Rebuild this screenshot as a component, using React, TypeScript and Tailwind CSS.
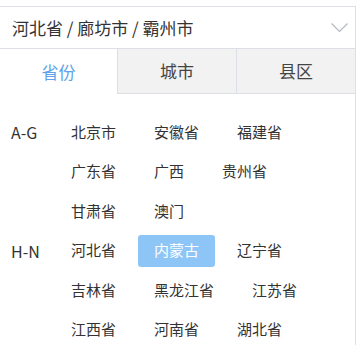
const groups = [
    {
        label: 'A-G',
        items: ['北京市', '安徽省', '福建省', '广东省', '广西', '贵州省', '甘肃省', '澳门'],
    },
    {
        label: 'H-N',
        items: ['河北省', '内蒙古', '辽宁省', '吉林省', '黑龙江省', '江苏省', '江西省', '河南省', '湖北省'],
    },
];

const active = '内蒙古';

export default function App() {
    return (
        <div
            className="min-h-screen bg-white pt-[6px] overflow-hidden"
            style={{ fontFamily: '"Noto Sans CJK SC", "Noto Sans", sans-serif' }}
        >
            <div className="w-[356px] h-[400px] border-t border-r border-[#dcdfe6]">
                {/* Selected value */}
                <div className="h-[42px] flex items-center justify-between pl-3 pr-[7px] border-b border-[#dcdfe6]">
                    <span className="text-[17px] text-[#333]">河北省 / 廊坊市 / 霸州市</span>
                    <svg width="17" height="10" viewBox="0 0 17 10" fill="none" className="shrink-0 text-[#b4b8c0]">
                        <path d="M0.5 0.5 L8.5 8.5 L16.5 0.5" stroke="currentColor" strokeWidth="1.2" />
                    </svg>
                </div>

                {/* Tabs */}
                <div className="flex h-[45px]">
                    <div className="w-[117px] flex items-center justify-center text-[17px] text-[#5ea3ea]">省份</div>
                    <div className="w-[119px] flex items-center justify-center text-[17px] text-[#444] bg-[#f2f2f2] border-l border-b border-[#dcdfe6]">
                        城市
                    </div>
                    <div className="flex-1 flex items-center justify-center text-[17px] text-[#444] bg-[#f2f2f2] border-l border-b border-[#dcdfe6]">
                        县区
                    </div>
                </div>

                {/* Province list */}
                <div className="pt-[22px] flex flex-col gap-[7.5px]">
                    {groups.map((g) => (
                        <div key={g.label} className="flex">
                            <div className="w-[55px] shrink-0 pl-[11px] h-8 leading-8 text-[16px] text-[#333]">{g.label}</div>
                            <div className="flex-1 flex flex-wrap gap-x-[6px] gap-y-[7.5px]">
                                {g.items.map((p) => (
                                    <span
                                        key={p}
                                        className={`h-8 px-4 flex items-center rounded-[3px] text-[15px] ${
                                            p === active ? 'bg-[#8ec5f7] text-white' : 'text-[#333]'
                                        }`}
                                    >
                                        {p}
                                    </span>
                                ))}
                            </div>
                        </div>
                    ))}
                </div>
            </div>
        </div>
    );
}
